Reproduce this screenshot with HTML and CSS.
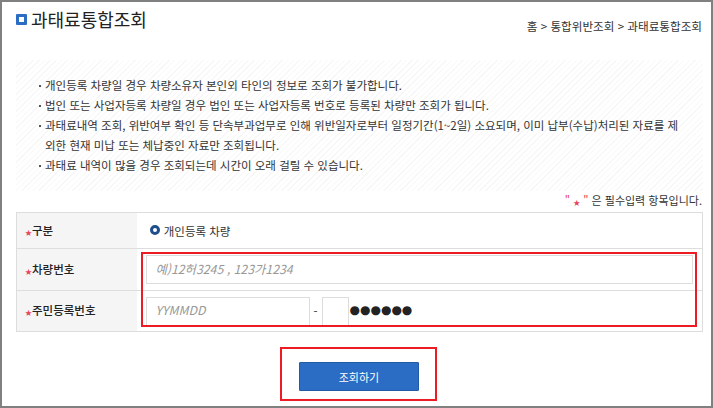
FILE: index.html
```html
<!DOCTYPE html>
<html lang="ko">

<head>
  <meta charset="UTF-8">
  <meta name="viewport" content="width=device-width, initial-scale=1.0">
  <title>과태료통합조회</title>
  <link rel="stylesheet" href="styles.css">
</head>

<body>
  <div class="frame">

    <!-- Page Header -->
    <div class="page-header">
      <h1 class="page-title"><span class="title-icon"></span>과태료통합조회</h1>
      <div class="breadcrumb">홈 &gt; 통합위반조회 &gt; 과태료통합조회</div>
    </div>

    <!-- Notice Box -->
    <ul class="notice">
      <li>개인등록 차량일 경우 차량소유자 본인외 타인의 정보로 조회가 불가합니다.</li>
      <li>법인 또는 사업자등록 차량일 경우 법인 또는 사업자등록 번호로 등록된 차량만 조회가 됩니다.</li>
      <li>과태료내역 조회, 위반여부 확인 등 단속부과업무로 인해 위반일자로부터 일정기간(1~2일) 소요되며, 이미 납부(수납)처리된 자료를 제<br>외한 현재 미납 또는 체납중인 자료만 조회됩니다.</li>
      <li>과태료 내역이 많을 경우 조회되는데 시간이 오래 걸릴 수 있습니다.</li>
    </ul>

    <p class="required-note"><span class="quote">"</span> <span class="star">★</span> <span class="quote">"</span> 은 필수입력 항목입니다.</p>

    <!-- Search Form -->
    <table class="form-table">
      <tr class="row-type">
        <th><span class="star">★</span>구분</th>
        <td>
          <span class="radio"></span>
          <span class="radio-label">개인등록 차량</span>
        </td>
      </tr>
      <tr class="row-car">
        <th><span class="star">★</span>차량번호</th>
        <td><input type="text" class="form-field field-wide" placeholder="예)12허3245 , 123가1234"></td>
      </tr>
      <tr class="row-id">
        <th><span class="star">★</span>주민등록번호</th>
        <td>
          <div class="id-fields">
            <input type="text" class="form-field field-birth" placeholder="YYMMDD">
            <span class="dash">-</span>
            <input type="text" class="form-field field-digit">
            <span class="dots">●●●●●●</span>
          </div>
        </td>
      </tr>
    </table>

    <div class="actions">
      <button class="submit-btn">조회하기</button>
    </div>

    <!-- Red annotation boxes -->
    <div class="mark mark-fields"></div>
    <div class="mark mark-button"></div>
  </div>
</body>

</html>
```

FILE: styles.css
```css
* {
  box-sizing: border-box;
}

body {
  margin: 0;
  font-family: "Noto Sans CJK KR", "Noto Sans", sans-serif;
  color: #333;
}

.frame {
  position: relative;
  width: 713px;
  height: 408px;
  padding: 0 8px 0 14px;
  border: 2px solid #808080;
  background: #fff;
  overflow: hidden;
}

/* Page Header */
.page-header {
  display: flex;
  justify-content: space-between;
  height: 58px;
}

.page-title {
  display: flex;
  align-items: center;
  height: 34px;
  margin: 0;
  font-size: 18px;
  font-weight: 400;
  color: #222;
}

.title-icon {
  width: 11px;
  height: 11px;
  margin-right: 4px;
  border: 3px solid #2b6cc4;
  border-radius: 1px;
  background: #fff;
}

.breadcrumb {
  padding: 16px 1px 0 0;
  font-size: 11.6px;
  line-height: 16px;
  color: #333;
}

/* Notice Box */
.notice {
  height: 131px;
  margin: 0;
  padding: 15px 0 0 29px;
  list-style: none;
  font-size: 11.5px;
  line-height: 20px;
  color: #333;
  background: repeating-linear-gradient(135deg, #f7f7f7 0, #f7f7f7 1px, #fff 1px, #fff 4px);
}

.notice li {
  position: relative;
}

.notice li::before {
  content: "";
  position: absolute;
  left: -6px;
  top: 10px;
  width: 2px;
  height: 2px;
  background: #555;
}

/* Required note */
.required-note {
  height: 21px;
  margin: 0;
  padding-right: 1px;
  font-size: 11px;
  line-height: 18px;
  text-align: right;
  color: #333;
}

.star {
  font-size: 7px;
  color: #e8435a;
}

.quote {
  color: #e8435a;
}

/* Form Table */
.form-table {
  width: 100%;
  border-collapse: collapse;
  border: 1px solid #ddd;
  font-size: 11.5px;
}

.form-table th,
.form-table td {
  padding: 0;
  border-top: 1px solid #ddd;
  vertical-align: middle;
}

.form-table th {
  width: 120px;
  padding: 0 0 2px 8px;
  text-align: left;
  font-weight: 500;
  color: #222;
  background: #f5f5f5;
}

.form-table td {
  padding-left: 9px;
}

.row-type {
  height: 36px;
}

.row-car {
  height: 42px;
}

.row-id {
  height: 41px;
}

.row-type td {
  padding-bottom: 2px;
}

.radio {
  display: inline-block;
  width: 10px;
  height: 10px;
  margin: 0 1px 0 4px;
  border: 3px solid #1f4e8c;
  border-radius: 50%;
  background: #fff;
  vertical-align: middle;
}

.radio-label {
  vertical-align: middle;
}

.form-field {
  display: block;
  height: 29px;
  padding: 0 9px 2px;
  border: 1px solid #ddd;
  outline: none;
  font-family: "Noto Sans CJK KR", "Noto Sans", sans-serif;
  font-size: 12.3px;
  background: #fff;
}

.form-field::placeholder {
  font-style: italic;
  color: #999;
}

.field-wide {
  width: 547px;
}

.id-fields {
  display: flex;
  align-items: center;
}

.field-birth {
  width: 164px;
}

.dash {
  width: 12px;
  text-align: center;
}

.field-digit {
  width: 27px;
}

.dots {
  margin: 0 0 2px 1px;
  font-family: "DejaVu Sans", sans-serif;
  font-size: 12px;
  color: #222;
}

/* Submit Button */
.actions {
  display: flex;
  justify-content: center;
  padding: 30px 1px 0 0;
}

.submit-btn {
  width: 120px;
  height: 29px;
  border: 1px solid #235aa6;
  border-radius: 1px;
  font-family: "Noto Sans CJK KR", "Noto Sans", sans-serif;
  font-size: 11px;
  color: #fff;
  background: #2b6cc4;
}

/* Red annotation boxes */
.mark {
  position: absolute;
  border: 2px solid #ed1c24;
}

.mark-fields {
  left: 139px;
  top: 250px;
  width: 556px;
  height: 75px;
}

.mark-button {
  left: 278px;
  top: 345px;
  width: 157px;
  height: 54px;
}
```
